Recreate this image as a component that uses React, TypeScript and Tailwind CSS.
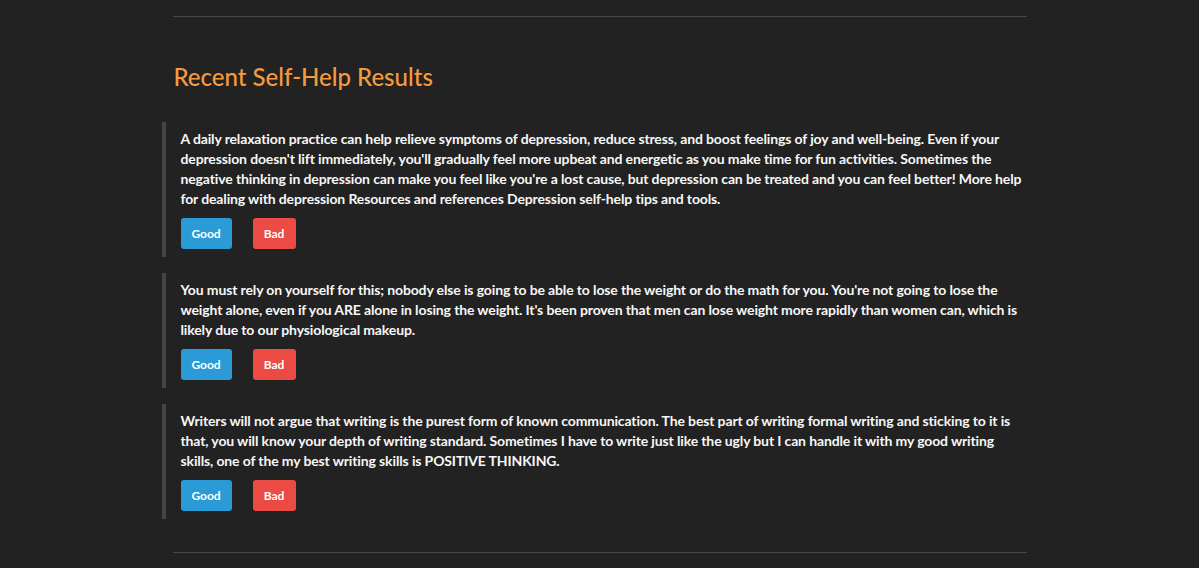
const results = [
  "A daily relaxation practice can help relieve symptoms of depression, reduce stress, and boost feelings of joy and well-being. Even if your depression doesn't lift immediately, you'll gradually feel more upbeat and energetic as you make time for fun activities. Sometimes the negative thinking in depression can make you feel like you're a lost cause, but depression can be treated and you can feel better! More help for dealing with depression Resources and references Depression self-help tips and tools.",
  "You must rely on yourself for this; nobody else is going to be able to lose the weight or do the math for you. You're not going to lose the weight alone, even if you ARE alone in losing the weight. It's been proven that men can lose weight more rapidly than women can, which is likely due to our physiological makeup.",
  "Writers will not argue that writing is the purest form of known communication. The best part of writing formal writing and sticking to it is that, you will know your depth of writing standard. Sometimes I have to write just like the ugly but I can handle it with my good writing skills, one of the my best writing skills is POSITIVE THINKING.",
];

function ResultQuote({ text }: { text: string }): React.ReactElement {
  return (
    <blockquote className="mb-[16px] border-l-4 border-[#444444] pt-[7px] pb-[8px] pl-[15px] pr-[15px]">
      <p className="text-[14px] font-bold leading-[20px] tracking-[-0.13px] text-[#f7f7f7]">{text}</p>
      <div className="mt-[9px] flex gap-[21px]">
        <button className="h-[31px] w-[51px] rounded-[3px] bg-[#2a9bd7] text-[12px] font-bold text-white">
          Good
        </button>
        <button className="h-[31px] w-[43px] rounded-[3px] bg-[#ec4b43] text-[12px] font-bold text-white">
          Bad
        </button>
      </div>
    </blockquote>
  );
}

export default function App(): React.ReactElement {
  return (
    <div className="min-h-[568px] bg-[#222222] font-['Lato','Liberation_Sans',sans-serif]">
      <div className="mx-auto w-[876px] pt-[16px]">
        <hr className="mx-[11px] border-t border-[#464646]" />
        <h2 className="mt-[44px] mb-[29px] pl-[12px] text-[24px] leading-[32px] font-medium text-[#f79a3e]">
          Recent Self-Help Results
        </h2>
        {results.map((r, i) => (
          <ResultQuote key={i} text={r} />
        ))}
        <hr className="mx-[11px] mt-[33px] border-t border-[#464646]" />
      </div>
    </div>
  );
}
